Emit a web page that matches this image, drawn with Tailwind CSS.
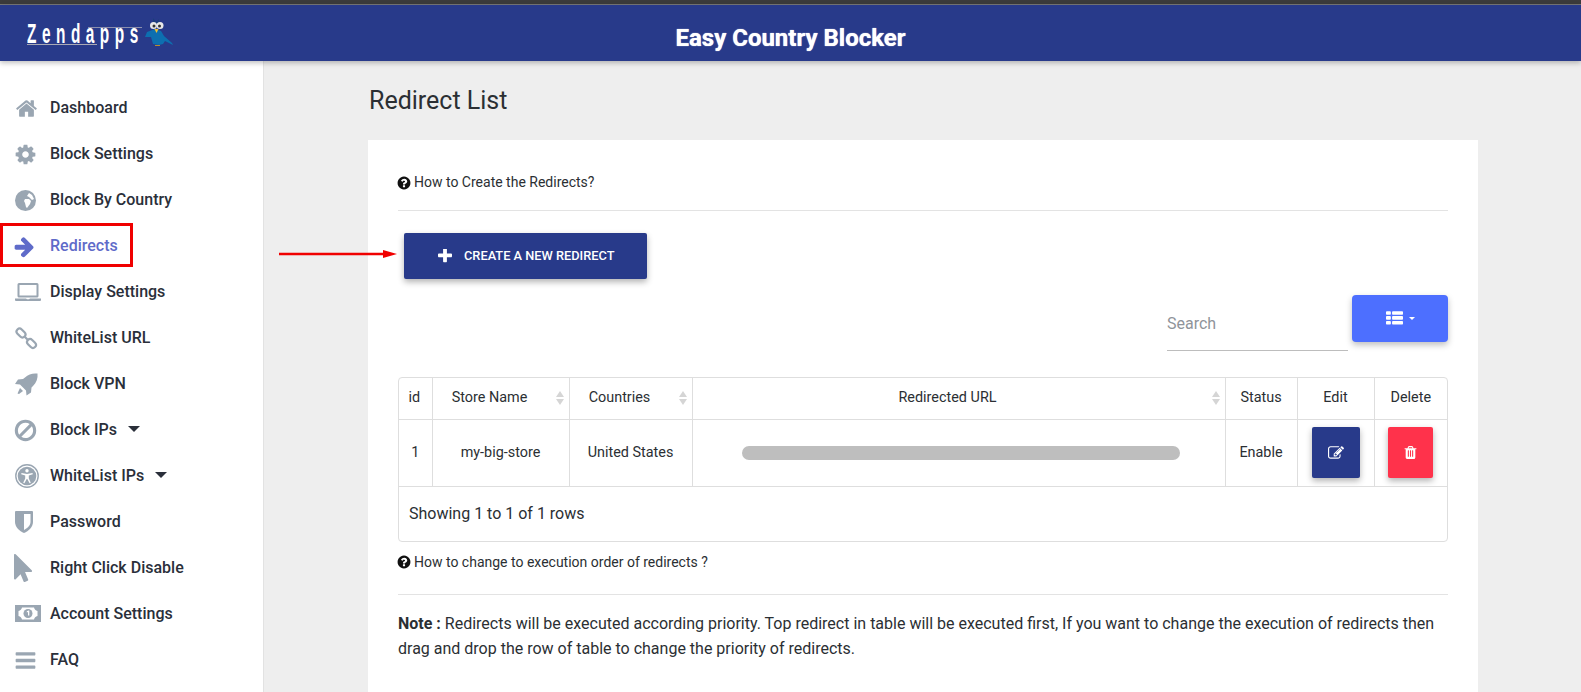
<!DOCTYPE html>
<html lang="en">
<head>
<meta charset="utf-8">
<title>Easy Country Blocker</title>
<script src="https://cdn.jsdelivr.net/npm/@tailwindcss/browser@4"></script>
</head>
<body class="font-['Roboto',sans-serif] text-[#212529]">
<div class="relative w-[1581px] h-[692px] overflow-hidden bg-[#eeeeee] flex flex-col">
  <div class="h-[5px] bg-[#3b3b3b] border-b border-b-[#777]"></div>
  <header class="relative z-10 h-[56px] bg-[#283a8a] shadow-[0_2px_5px_rgba(0,0,0,0.25)] flex items-center justify-center">
    <div class="absolute left-[27px] top-[14px] h-[32px] w-[150px]">
      <span class="absolute left-0 top-[-1px] block origin-left scale-x-[0.55] font-['Liberation_Sans',sans-serif] font-bold text-white text-[28px] leading-[32px] tracking-[10px] whitespace-nowrap">Zendapps</span>
      <span class="absolute left-0 top-[25px] w-[70px] h-px bg-[#a9a9b5]"></span>
      <span class="absolute left-[61px] top-[8px] w-[54px] h-px bg-[#8b8fae]"></span>
      <svg class="absolute left-[114px] top-[-1px]" width="34" height="30" viewBox="0 0 34 30"><path d="M12 0l3 4 3-3v5h-6z" fill="#1c3f7a"/><path d="M6 14l8-3 6 2 3 5 8 7 1 2-8-4-2 3-4 1-6-1-2-7-6 0z" fill="#0d6fb0"/><circle cx="12.500" cy="7.500" r="3.500" fill="#e8e8e8"/><circle cx="19" cy="7.500" r="3.500" fill="#e8e8e8"/><circle cx="13" cy="8" r="1.500" fill="#333"/><circle cx="18.500" cy="8" r="1.500" fill="#333"/><path d="M13.500 11h4l-2 4z" fill="#f2c230"/><path d="M14 27h5v1h-5z" fill="#b98a30"/></svg>
    </div>
    <h1 class="pt-[9px] text-white font-bold text-[24px] leading-none [text-shadow:0_0_1px_#fff]">Easy Country Blocker</h1>
  </header>
  <div class="flex flex-1 min-h-0">
    <nav class="w-[264px] shrink-0 bg-white border-r border-r-[#e2e2e2] pt-[24px] text-[#2a2f3a] font-medium text-[16px]">
      <a class="flex items-center h-[46px] pl-[15px]"><span class="w-[35px] flex items-center"><svg width="23" height="23" viewBox="0 0 1792 1792" fill="#9aa6b2"><path d="M1472 992v480q0 26-19 45t-45 19h-384v-384h-256v384h-384q-26 0-45-19t-19-45v-480q0-1 .5-3t.5-3l575-474 575 474q1 2 1 6zm223-69l-62 74q-8 9-21 11h-3q-13 0-21-7l-692-577-692 577q-12 8-24 7-13-2-21-11l-62-74q-8-10-7-23.500t11-21.500l719-599q32-26 76-26t76 26l244 204v-195q0-14 9-23t23-9h192q14 0 23 9t9 23v408l219 182q10 8 11 21.500t-7 23.500z"/></svg></span>Dashboard</a>
      <a class="flex items-center h-[46px] pl-[15px]"><span class="w-[35px] flex items-center"><svg class="-ml-[1px]" width="23" height="23" viewBox="0 0 1792 1792" fill="#9aa6b2"><path d="M1152 896q0-106-75-181t-181-75-181 75-75 181 75 181 181 75 181-75 75-181zm512-109v222q0 12-8 23t-20 13l-185 28q-19 54-39 91 35 50 107 138 10 12 10 25t-9 23q-27 37-99 108t-94 71q-12 0-26-9l-138-108q-44 23-91 38-16 136-29 186-7 28-36 28h-222q-14 0-24.500-8.500t-11.500-21.500l-28-184q-49-16-90-37l-141 107q-10 9-25 9-14 0-25-11-126-114-165-168-7-10-7-23 0-12 8-23 15-21 51-66.500t54-70.500q-27-50-41-99l-183-27q-13-2-21-12.500t-8-23.500v-222q0-12 8-23t19-13l186-28q14-46 39-92-40-57-107-138-10-12-10-24 0-10 9-23 26-36 98.500-107.500t94.500-71.500q13 0 26 10l138 107q44-23 91-38 16-136 29-186 7-28 36-28h222q14 0 24.500 8.500t11.500 21.500l28 184q49 16 90 37l142-107q9-9 24-9 13 0 25 10 129 119 165 170 7 8 7 22 0 12-8 23-15 21-51 66.500t-54 70.500q26 50 41 98l183 28q13 2 21 12.500t8 23.500z"/></svg></span>Block Settings</a>
      <a class="flex items-center h-[46px] pl-[15px]"><span class="w-[35px] flex items-center"><svg width="21" height="21" viewBox="0 0 21 21"><circle cx="10.500" cy="10.500" r="10.500" fill="#9aa6b2"/><path d="M10 9l4 0 2 2-1 3-3 4-1-1-1-4-1-2zM14 3l3 2 2 4-2 1-1-1-2-2-2-1z" fill="#fff"/></svg></span>Block By Country</a>
      <a class="flex items-center h-[46px] pl-[15px] text-[#5f6bc9]"><span class="w-[35px] flex items-center"><svg class="-ml-[2px]" width="23" height="23" viewBox="0 0 1792 1792" fill="#5f6bc9"><path d="M1600 960q0 54-37 91l-651 651q-39 37-91 37-51 0-90-37l-75-75q-38-38-38-91t38-91l293-293h-704q-52 0-84.500-37.500t-32.500-90.500v-128q0-53 32.500-90.500t84.500-37.500h704l-293-294q-38-36-38-90t38-90l75-75q38-38 90-38 53 0 91 38l651 651q37 35 37 90z"/></svg></span>Redirects</a>
      <a class="flex items-center h-[46px] pl-[15px]"><span class="w-[35px] flex items-center"><svg width="26" height="18" viewBox="0 0 26 18" fill="#9aa6b2"><path fill-rule="evenodd" d="M4 0h18a1.500 1.500 0 0 1 1.500 1.500V13a1.500 1.500 0 0 1-1.500 1.500H4A1.500 1.500 0 0 1 2.500 13V1.500A1.500 1.500 0 0 1 4 0zm.5 2v10.500h17V2z"/><path d="M0 15.500h11l1 .7h2l1-.7h11V17a1 1 0 0 1-1 1H1a1 1 0 0 1-1-1z"/></svg></span>Display Settings</a>
      <a class="flex items-center h-[46px] pl-[15px]"><span class="w-[35px] flex items-center"><svg width="23" height="23" viewBox="0 0 23 23" fill="none" stroke="#9aa6b2" stroke-width="2.200"><rect x="-5" y="-3" width="10" height="6" rx="3" transform="translate(6 6) rotate(45)"/><rect x="-5" y="-3" width="10" height="6" rx="3" transform="translate(16.500 16.500) rotate(45)"/><path d="M9.500 9.500l3.500 3.500"/></svg></span>WhiteList URL</a>
      <a class="flex items-center h-[46px] pl-[15px]"><span class="w-[35px] flex items-center"><svg width="23" height="23" viewBox="0 0 23 23" fill="#9aa6b2"><path d="M22.500 0.500c.5 5-1 9-4.500 12.500l-1.500 1.500-.5 5-4.500 3-.5-5-3-3-3-3-5-.5 3-4.500 5-.5L10 4.500C13.500 1 17.500 0 22.500 .5z"/><path d="M5 15l3 3-4 3-1.500-.5z"/></svg></span>Block VPN</a>
      <a class="flex items-center h-[46px] pl-[15px]"><span class="w-[35px] flex items-center"><svg class="-ml-[2px]" width="25" height="25" viewBox="0 0 1792 1792" fill="#9aa6b2"><path d="M1440 893q0-161-87-295l-754 753q137 89 297 89 111 0 211.500-43.500t173.500-116.500 116-174.500 43-212.500zm-999 299l755-754q-135-91-300-91-148 0-273 73t-198 199-73 274q0 162 89 299zm1223-299q0 157-61 300t-163.500 246-245 164-298.500 61-298.500-61-245-164-163.500-246-61-300 61-299.500 163.500-245.500 245-164 298.500-61 298.500 61 245 164 163.500 245.500 61 299.500z"/></svg></span>Block IPs<span class="ml-[11px] mb-[3px] w-0 h-0 border-x-[6px] border-x-transparent border-t-[6px] border-t-[#2a2f3a]"></span></a>
      <a class="flex items-center h-[46px] pl-[15px]"><span class="w-[35px] flex items-center"><svg width="24" height="24" viewBox="0 0 24 24"><circle cx="12" cy="12" r="11.200" fill="none" stroke="#9aa6b2" stroke-width="1.400"/><circle cx="12" cy="12" r="9.300" fill="#9aa6b2"/><circle cx="12" cy="6.800" r="1.700" fill="#fff"/><path d="M6.500 9l5.500 1 5.500-1 .3 1.200-4 1.300v3l2 4.300-1.200.5-2.300-4.200h-.600l-2.300 4.200-1.200-.5 2-4.300v-3l-4-1.300z" fill="#fff"/></svg></span>WhiteList IPs<span class="ml-[11px] mb-[3px] w-0 h-0 border-x-[6px] border-x-transparent border-t-[6px] border-t-[#2a2f3a]"></span></a>
      <a class="flex items-center h-[46px] pl-[15px]"><span class="w-[35px] flex items-center"><svg width="18" height="22" viewBox="0 0 18 22"><path d="M1 0h16a1 1 0 0 1 1 1v10c0 5-4.500 9-9 11-4.500-2-9-6-9-11V1a1 1 0 0 1 1-1z" fill="#9aa6b2"/><path d="M9 3h6.500v8c0 3.500-3.500 6.500-6.500 8z" fill="#fff"/></svg></span>Password</a>
      <a class="flex items-center h-[46px] pl-[15px]"><span class="w-[35px] flex items-center"><svg class="-ml-[5px] mr-[-8px]" width="28" height="28" viewBox="0 0 1792 1792" fill="#9aa6b2"><path d="M1389 1043q31 30 14 69-17 40-59 40h-382l201 476q10 25 0 49t-34 35l-177 75q-25 10-49 0t-35-34l-191-452-312 312q-19 19-45 19-12 0-24-5-40-17-40-59v-1504q0-42 40-59 12-5 24-5 27 0 45 19z"/></svg></span>Right Click Disable</a>
      <a class="flex items-center h-[46px] pl-[15px]"><span class="w-[35px] flex items-center"><svg width="26" height="18" viewBox="0 0 26 18"><rect width="26" height="17" fill="#9aa6b2"/><path d="M7 2.500h12c.5 2 1.500 3 3.500 3.500v5c-2 .5-3 1.500-3.500 3.500H7c-.5-2-1.500-3-3.500-3.500V6C5.500 5.500 6.500 4.500 7 2.500z" fill="#fff"/><circle cx="13" cy="8.500" r="4.500" fill="#9aa6b2"/><path d="M11.800 6.200l1.700-.8h.8v5.200h-1.300V7.100l-1.200.5z" fill="#fff"/></svg></span>Account Settings</a>
      <a class="flex items-center h-[46px] pl-[15px]"><span class="w-[35px] flex items-center"><svg class="-ml-[1px]" width="23" height="23" viewBox="0 0 1792 1792" fill="#9aa6b2" preserveAspectRatio="none"><path d="M1664 1344v128q0 26-19 45t-45 19h-1408q-26 0-45-19t-19-45v-128q0-26 19-45t45-19h1408q26 0 45 19t19 45zm0-512v128q0 26-19 45t-45 19h-1408q-26 0-45-19t-19-45v-128q0-26 19-45t45-19h1408q26 0 45 19t19 45zm0-512v128q0 26-19 45t-45 19h-1408q-26 0-45-19t-19-45v-128q0-26 19-45t45-19h1408q26 0 45 19t19 45z"/></svg></span>FAQ</a>
    </nav>
    <main class="flex-1 pl-[104px] pt-[26px] min-w-0">
      <h2 class="ml-[1px] text-[25px] leading-[28px] text-[#2b2f33] font-normal">Redirect List</h2>
      <section class="mt-[25px] w-[1110px] h-[560px] bg-white px-[30px] pt-[32px] text-[14px] text-[#2b2f33]">
        <p class="flex items-center gap-[4px] h-[21px]"><svg width="12" height="12" viewBox="0 0 1792 1792" fill="#111" class="scale-[1.25]"><path d="M1024 1376v-192q0-14-9-23t-23-9h-192q-14 0-23 9t-9 23v192q0 14 9 23t23 9h192q14 0 23-9t9-23zm256-672q0-88-55.500-163t-138.500-116-170-41q-243 0-371 213-15 24 8 42l132 100q7 6 19 6 16 0 25-12 53-68 86-92 34-24 86-24 48 0 85.500 26t37.500 59q0 38-20 61t-68 45q-63 28-115.500 86.500t-52.500 125.500v36q0 14 9 23t23 9h192q14 0 23-9t9-23q0-19 21.500-49.500t54.500-49.500q32-18 49-28.500t46-35 44.500-48 28-60.500 12.500-81zm384 192q0 209-103 385.500t-279.500 279.500-385.500 103-385.500-103-279.500-279.500-103-385.500 103-385.500 279.500-279.500 385.500-103 385.500 103 279.500 279.500 103 385.500z"/></svg>How to Create the Redirects?</p>
        <hr class="mt-[17px] border-t border-t-[#e3e3e3]">
        <button class="mt-[22px] ml-[6px] w-[243px] h-[46px] rounded-[2px] bg-[#283a8a] text-white text-[12.800px] font-medium flex items-center pl-[34px] gap-[12px] shadow-[0_3px_6px_rgba(0,0,0,0.3)]"><svg width="14" height="14" viewBox="192 192 1408 1408" fill="#fff"><path d="M1600 736v192q0 40-28 68t-68 28h-416v416q0 40-28 68t-68 28h-192q-40 0-68-28t-28-68v-416h-416q-40 0-68-28t-28-68v-192q0-40 28-68t68-28h416v-416q0-40 28-68t68-28h192q40 0 68 28t28 68v416h416q40 0 68 28t28 68z"/></svg>CREATE A NEW REDIRECT</button>
        <div class="mt-[16px] h-[82px] flex justify-end items-start gap-[4px]">
          <div class="w-[181px] h-[56px] border-b border-b-[#bdbdbd] flex items-center text-[16px] text-[#8f949a] pt-[2px]">Search</div>
          <button class="w-[96px] h-[47px] rounded-[4px] bg-[#4d6fff] flex items-center justify-center gap-[6px] shadow-[0_3px_6px_rgba(0,0,0,0.25)]"><svg width="17" height="17" viewBox="0 0 1792 1792" fill="#fff"><path d="M512 1248v192q0 40-28 68t-68 28h-320q-40 0-68-28t-28-68v-192q0-40 28-68t68-28h320q40 0 68 28t28 68zm0-512v192q0 40-28 68t-68 28h-320q-40 0-68-28t-28-68v-192q0-40 28-68t68-28h320q40 0 68 28t28 68zm1280 512v192q0 40-28 68t-68 28h-960q-40 0-68-28t-28-68v-192q0-40 28-68t68-28h960q40 0 68 28t28 68zm-1280-1024v192q0 40-28 68t-68 28h-320q-40 0-68-28t-28-68v-192q0-40 28-68t68-28h320q40 0 68 28t28 68zm1280 512v192q0 40-28 68t-68 28h-960q-40 0-68-28t-28-68v-192q0-40 28-68t68-28h960q40 0 68 28t28 68zm0-512v192q0 40-28 68t-68 28h-960q-40 0-68-28t-28-68v-192q0-40 28-68t68-28h960q40 0 68 28t28 68z"/></svg><span class="w-0 h-0 border-x-[3px] border-x-transparent border-t-[3px] border-t-white"></span></button>
        </div>
        <div class="w-[1050px] border border-[#dedede] rounded-[4px] overflow-hidden">
          <table class="w-[1048px] table-fixed border-collapse text-center text-[14.400px] text-[#2b2f33]">
            <colgroup><col class="w-[33px]"><col class="w-[137px]"><col class="w-[123px]"><col class="w-[533px]"><col class="w-[72px]"><col class="w-[77px]"><col class="w-[73px]"></colgroup>
            <thead>
              <tr class="h-[41px] border-b border-b-[#dedede]">
                <th class="font-normal border-r border-r-[#dedede] pr-[2px]">id</th>
                <th class="relative font-normal border-r border-r-[#dedede] pr-[22px]">Store Name<span class="absolute right-[5px] top-[13px] flex flex-col gap-[2px]"><span class="w-0 h-0 border-x-[4px] border-x-transparent border-b-[6px] border-b-[#d5d5d5]"></span><span class="w-0 h-0 border-x-[4px] border-x-transparent border-t-[6px] border-t-[#d5d5d5]"></span></span></th>
                <th class="relative font-normal border-r border-r-[#dedede] pr-[22px]">Countries<span class="absolute right-[5px] top-[13px] flex flex-col gap-[2px]"><span class="w-0 h-0 border-x-[4px] border-x-transparent border-b-[6px] border-b-[#d5d5d5]"></span><span class="w-0 h-0 border-x-[4px] border-x-transparent border-t-[6px] border-t-[#d5d5d5]"></span></span></th>
                <th class="relative font-normal border-r border-r-[#dedede] pr-[22px]">Redirected URL<span class="absolute right-[5px] top-[13px] flex flex-col gap-[2px]"><span class="w-0 h-0 border-x-[4px] border-x-transparent border-b-[6px] border-b-[#d5d5d5]"></span><span class="w-0 h-0 border-x-[4px] border-x-transparent border-t-[6px] border-t-[#d5d5d5]"></span></span></th>
                <th class="font-normal border-r border-r-[#dedede]">Status</th>
                <th class="font-normal border-r border-r-[#dedede]">Edit</th>
                <th class="font-normal">Delete</th>
              </tr>
            </thead>
            <tbody>
              <tr class="h-[67px] border-b border-b-[#dedede]">
                <td class="border-r border-r-[#dedede]">1</td>
                <td class="border-r border-r-[#dedede]">my-big-store</td>
                <td class="border-r border-r-[#dedede]">United States</td>
                <td class="border-r border-r-[#dedede]"><div class="ml-[49px] w-[438px] h-[14px] rounded-full bg-[#bebebe]"></div></td>
                <td class="border-r border-r-[#dedede]">Enable</td>
                <td class="border-r border-r-[#dedede]"><button class="mx-auto w-[48px] h-[51px] rounded-[2px] bg-[#283a8a] flex items-center justify-center shadow-[0_3px_6px_rgba(0,0,0,0.3)]"><svg width="16" height="16" viewBox="0 0 1792 1792" fill="#fff"><path d="M888 1184l116-116-152-152-116 116v56h96v96h56zm440-720q-16-16-33 1l-350 350q-17 17-1 33t33-1l350-350q17-17 1-33zm80 594v190q0 119-84.500 203.500t-203.500 84.500h-832q-119 0-203.500-84.500t-84.500-203.500v-832q0-119 84.500-203.500t203.500-84.500h832q63 0 117 25 15 7 18 23 3 17-9 29l-49 49q-14 14-32 8-23-6-45-6h-832q-66 0-113 47t-47 113v832q0 66 47 113t113 47h832q66 0 113-47t47-113v-126q0-13 9-22l64-64q15-15 35-7t20 29zm-96-738l288 288-672 672h-288v-288zm444 132l-92 92-288-288 92-92q28-28 68-28t68 28l152 152q28 28 28 68t-28 68z"/></svg></button></td>
                <td><button class="mx-auto w-[45px] h-[51px] rounded-[2px] bg-[#ff324b] flex items-center justify-center shadow-[0_3px_6px_rgba(0,0,0,0.3)]"><svg width="15" height="15" viewBox="0 0 1792 1792" fill="#fff"><path d="M704 1376v-704q0-14-9-23t-23-9h-64q-14 0-23 9t-9 23v704q0 14 9 23t23 9h64q14 0 23-9t9-23zm256 0v-704q0-14-9-23t-23-9h-64q-14 0-23 9t-9 23v704q0 14 9 23t23 9h64q14 0 23-9t9-23zm256 0v-704q0-14-9-23t-23-9h-64q-14 0-23 9t-9 23v704q0 14 9 23t23 9h64q14 0 23-9t9-23zm-544-992h448l-48-117q-7-9-17-11h-317q-10 2-17 11zm928 32v64q0 14-9 23t-23 9h-96v948q0 83-47 143.500t-113 60.500h-832q-66 0-113-58.500t-47-141.500v-952h-96q-14 0-23-9t-9-23v-64q0-14 9-23t23-9h309l70-167q15-37 54-63t79-26h320q40 0 79 26t54 63l70 167h309q14 0 23 9t9 23z"/></svg></button></td>
              </tr>
            </tbody>
          </table>
          <div class="h-[54px] flex items-center pl-[10px] text-[16px] text-[#2b2f33]">Showing 1 to 1 of 1 rows</div>
        </div>
        <p class="mt-[10px] flex items-center gap-[4px] h-[21px]"><svg width="12" height="12" viewBox="0 0 1792 1792" fill="#111" class="scale-[1.25]"><path d="M1024 1376v-192q0-14-9-23t-23-9h-192q-14 0-23 9t-9 23v192q0 14 9 23t23 9h192q14 0 23-9t9-23zm256-672q0-88-55.500-163t-138.500-116-170-41q-243 0-371 213-15 24 8 42l132 100q7 6 19 6 16 0 25-12 53-68 86-92 34-24 86-24 48 0 85.500 26t37.500 59q0 38-20 61t-68 45q-63 28-115.500 86.500t-52.500 125.500v36q0 14 9 23t23 9h192q14 0 23-9t9-23q0-19 21.500-49.500t54.500-49.500q32-18 49-28.500t46-35 44.500-48 28-60.500 12.500-81zm384 192q0 209-103 385.500t-279.500 279.500-385.500 103-385.500-103-279.500-279.500-103-385.500 103-385.500 279.500-279.500 385.500-103 385.500 103 279.500 279.500 103 385.500z"/></svg>How to change to execution order of redirects ?</p>
        <hr class="mt-[21px] border-t border-t-[#e3e3e3]">
        <p class="mt-[16px] text-[16px] leading-[25px] w-[1050px]"><b class="font-bold">Note :</b> Redirects will be executed according priority. Top redirect in table will be executed first, If you want to change the execution of redirects then drag and drop the row of table to change the priority of redirects.</p>
      </section>
    </main>
  </div>
  <div class="absolute left-0 top-[223px] w-[133px] h-[44px] border-[3px] border-[#f00000]"></div>
  <svg class="absolute left-[278px] top-[248px]" width="120" height="12" viewBox="0 0 120 12"><path d="M1 6h108" stroke="#f00000" stroke-width="2.500"/><path d="M105 2l14 4-14 4z" fill="#f00000"/></svg>
</div>
</body>
</html>
